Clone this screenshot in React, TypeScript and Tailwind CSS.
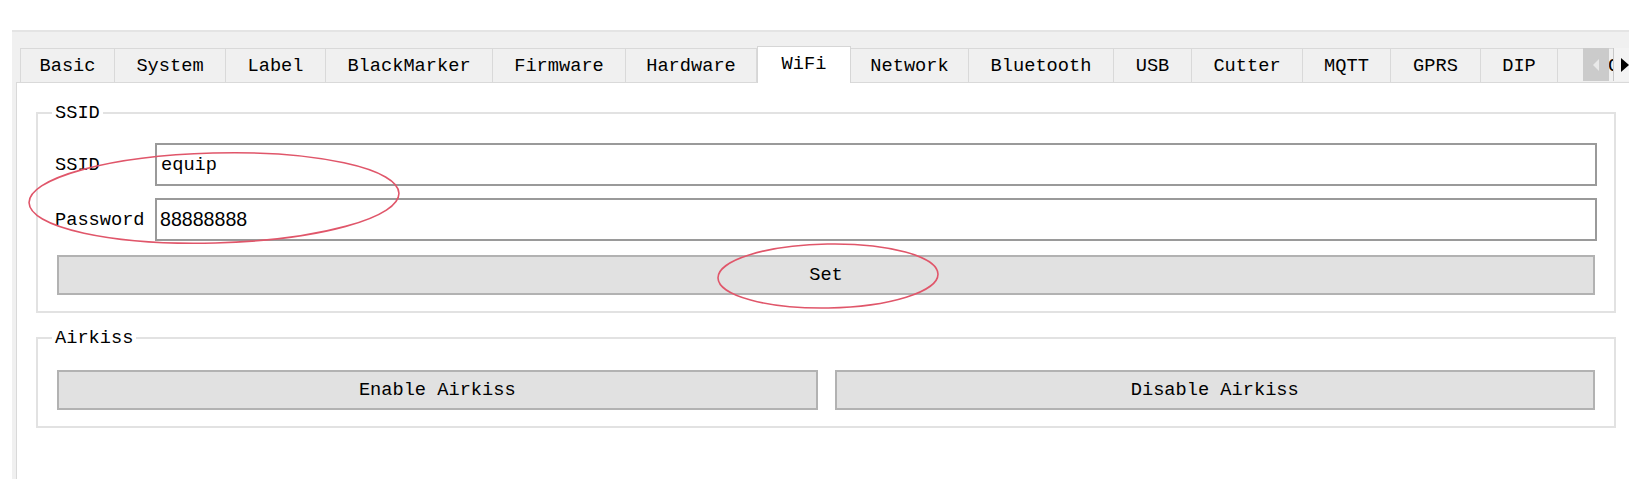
import React from "react";

const tabs: { label: string; w: string; selected?: boolean }[] = [
  { label: "Basic", w: "w-[95px]" },
  { label: "System", w: "w-[111px]" },
  { label: "Label", w: "w-[100px]" },
  { label: "BlackMarker", w: "w-[167px]" },
  { label: "Firmware", w: "w-[133px]" },
  { label: "Hardware", w: "w-[131px]" },
  { label: "WiFi", w: "w-[94px]", selected: true },
  { label: "Network", w: "w-[118px]" },
  { label: "Bluetooth", w: "w-[145px]" },
  { label: "USB", w: "w-[78px]" },
  { label: "Cutter", w: "w-[111px]" },
  { label: "MQTT", w: "w-[88px]" },
  { label: "GPRS", w: "w-[90px]" },
  { label: "DIP", w: "w-[77px]" },
  { label: "I2C", w: "w-[90px]" },
];

const mono = "[font-family:'Liberation_Mono','Courier_New',monospace] text-[18.67px] text-black";

function Button({ label, className = "" }: { label: string; className?: string }) {
  return (
    <div
      className={`h-[40px] bg-[#e1e1e1] border-2 border-[#b2b2b2] flex items-center justify-center ${mono} ${className}`}
    >
      {label}
    </div>
  );
}

export default function App() {
  return (
    <div className="relative w-[1647px] h-[479px] bg-white overflow-hidden">
      <div className="pt-[30px] pl-[12px]">
        <div className="w-[1617px] h-[449px] bg-[#f0f0f0] border-t-2 border-[#e4e4e4] flex flex-col overflow-hidden">
          <div className="h-[14px] shrink-0" />
          {/* tab row */}
          <div className="relative flex items-end pl-[8px] shrink-0">
            {tabs.map((t, i) =>
              t.selected ? (
                <div
                  key={t.label}
                  className={`${t.w} h-[37px] -mb-px relative z-10 bg-white border-t border-x border-[#d6d6d6] flex items-center justify-center pb-[3px] shrink-0 ${mono}`}
                >
                  {t.label}
                </div>
              ) : (
                <div
                  key={t.label}
                  className={`${t.w} h-[34px] bg-[#f0f0f0] border-t border-r ${
                    i === 0 ? "border-l" : ""
                  } border-[#d9d9d9] flex items-center justify-center shrink-0 ${mono}`}
                >
                  {t.label}
                </div>
              )
            )}
            {/* scroll buttons */}
            <div className="absolute left-[1571px] top-[2px] w-[26px] h-[33px] bg-[#cbcbcb] flex items-center justify-center z-20">
              <svg width="10" height="14" viewBox="0 0 10 14">
                <path d="M8 1 L2 7 L8 13 Z" fill="#e9e9e9" />
              </svg>
            </div>
            <div className="absolute left-[1601px] top-[2px] w-[26px] h-[33px] bg-[#f3f3f3] border-l border-[#c8c8c8] flex items-center pl-[6px] z-20">
              <svg width="10" height="16" viewBox="0 0 10 16">
                <path d="M1 1 L9 8 L1 15 Z" fill="#000" />
              </svg>
            </div>
          </div>
          {/* pane */}
          <div className="ml-[4px] flex-1 bg-white border-l border-t border-[#d9d9d9] pt-[19px] pl-[19px]">
            <fieldset className="w-[1580px] border-2 border-[#e2e2e2] px-[17px] pt-[19px] pb-[16px]">
              <legend className={`-ml-[3px] px-[3px] leading-[22px] ${mono}`}>SSID</legend>
              <div className="flex flex-col">
                <div className="flex items-center h-[43px]">
                  <div className={`w-[100px] shrink-0 ${mono}`}>SSID</div>
                  <input
                    readOnly
                    value="equip"
                    className={`flex-1 h-[43px] border-2 border-[#9a9a9a] bg-white pl-[4px] outline-none ${mono}`}
                  />
                </div>
                <div className="flex items-center h-[43px] mt-[12px]">
                  <div className={`w-[100px] shrink-0 ${mono}`}>Password</div>
                  <input
                    readOnly
                    value="88888888"
                    className="flex-1 h-[43px] border-2 border-[#9a9a9a] bg-white pl-[3px] outline-none [font-family:'Liberation_Sans',Arial,sans-serif] text-[19.6px] text-black"
                  />
                </div>
                <Button label="Set" className="mt-[14px] mx-[2px]" />
              </div>
            </fieldset>
            <fieldset className="w-[1580px] mt-[14px] border-2 border-[#e2e2e2] px-[19px] pt-[21px] pb-[16px]">
              <legend className={`-ml-[5px] px-[3px] leading-[22px] ${mono}`}>Airkiss</legend>
              <div className="flex gap-[17px]">
                <Button label="Enable Airkiss" className="flex-1" />
                <Button label="Disable Airkiss" className="flex-1" />
              </div>
            </fieldset>
          </div>
        </div>
      </div>
      {/* red annotation ellipses */}
      <svg
        className="absolute inset-0 pointer-events-none"
        width="1647"
        height="479"
        viewBox="0 0 1647 479"
      >
        <ellipse
          cx="214"
          cy="198"
          rx="185"
          ry="45"
          transform="rotate(-1.5 214 198)"
          fill="none"
          stroke="#e0566a"
          strokeWidth="1.6"
        />
        <ellipse
          cx="828"
          cy="276"
          rx="110"
          ry="32"
          transform="rotate(-1 828 276)"
          fill="none"
          stroke="#e0566a"
          strokeWidth="1.6"
        />
      </svg>
    </div>
  );
}
